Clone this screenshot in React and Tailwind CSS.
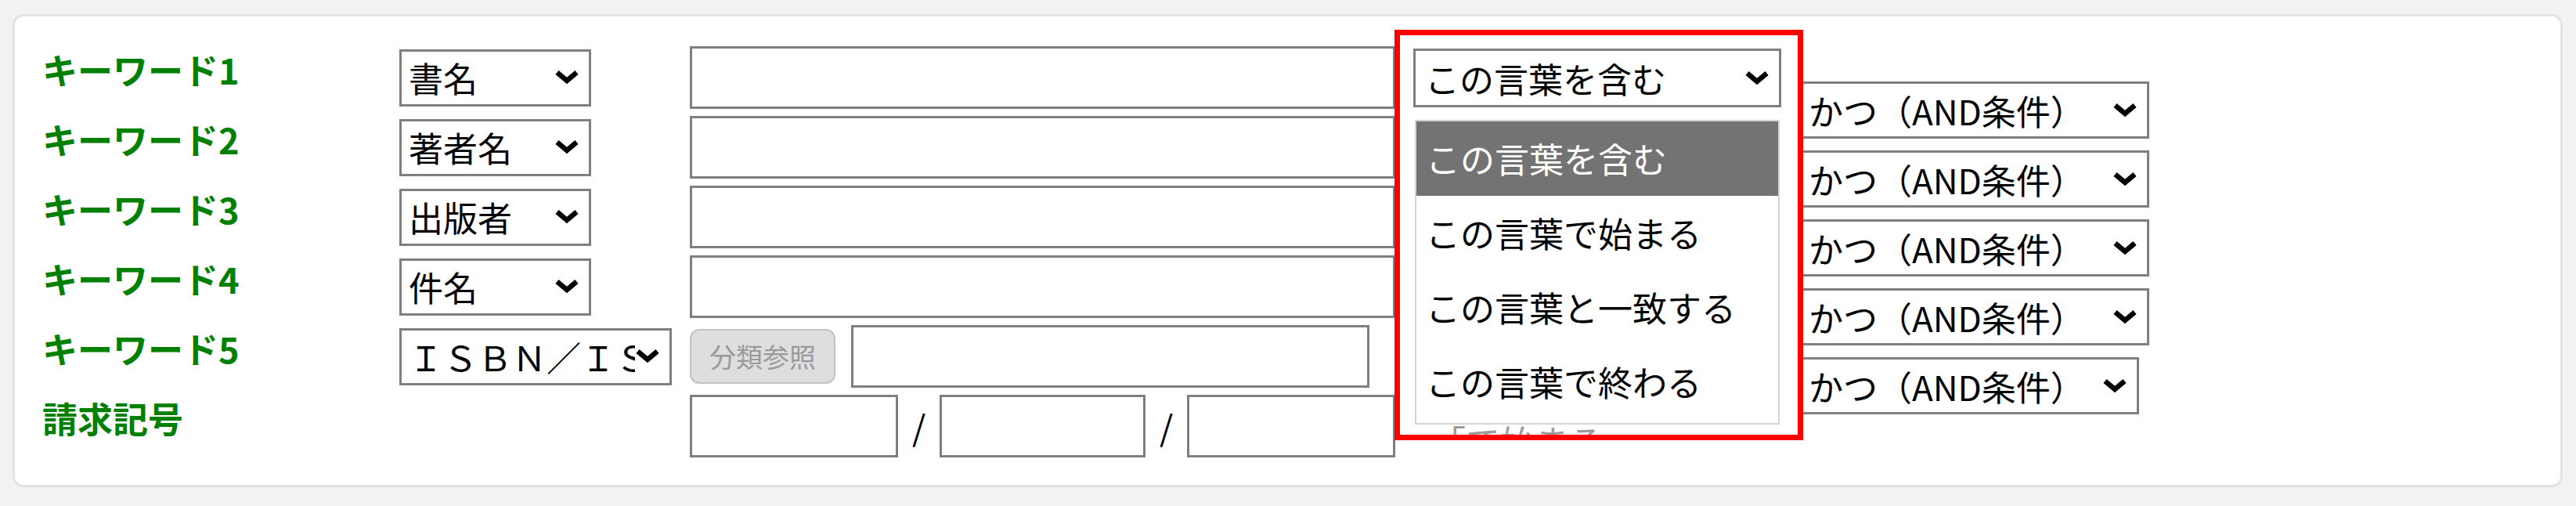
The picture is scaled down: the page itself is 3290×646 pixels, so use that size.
const font = "font-['Noto_Sans_CJK_JP','Noto_Sans_CJK_SC',sans-serif]";

function Chevron() {
  return (
    <svg width="32" height="20" viewBox="0 0 32 20" className="shrink-0">
      <polyline points="3.5,3.5 16,14 28.5,3.5" fill="none" stroke="#000" strokeWidth="6.5" strokeLinejoin="miter" />
    </svg>
  );
}

function Select({ className, text, padClass = "pl-[9px]" }) {
  return (
    <div className={`flex items-center border-[3px] border-[#7f7f7f] bg-white ${className}`}>
      <span className={`flex-1 overflow-hidden whitespace-nowrap text-[44px] leading-[1.5] text-black ${padClass}`}>{text}</span>
      <span className="mr-[12px] flex items-center">
        <Chevron />
      </span>
    </div>
  );
}

function Input({ className }) {
  return <div className={`h-[80px] border-[3px] border-[#7f7f7f] bg-white ${className}`} />;
}

function Label({ children }) {
  return (
    <div className="pt-[3px] text-[45px] font-bold leading-[1.2] text-[#008000] whitespace-nowrap">{children}</div>
  );
}

export default function App() {
  const rows = [
    { label: "キーワード1", sel: "書名" },
    { label: "キーワード2", sel: "著者名" },
    { label: "キーワード3", sel: "出版者" },
    { label: "キーワード4", sel: "件名" },
  ];
  const options = ["この言葉を含む", "この言葉で始まる", "この言葉と一致する", "この言葉で終わる"];
  return (
    <div className={`w-[3290px] h-[646px] bg-[#f2f2f2] pt-[18px] pl-[16px] ${font}`}>
      <div className="relative flex w-[3257px] h-[604px] rounded-[14px] border-[3px] border-[#e3e3e3] bg-white">
        <div className="ml-[35px] mt-[38px] grid h-fit grid-cols-[456px_371px_901px] grid-rows-[repeat(6,80px)] gap-y-[9px]">
          {rows.map((r) => (
            <div key={r.label} className="contents">
              <Label>{r.label}</Label>
              <div className="flex items-center">
                <Select className="h-[73px] w-[245px]" text={r.sel} />
              </div>
              <Input className="w-full" />
            </div>
          ))}
          <Label>キーワード5</Label>
          <div className="flex items-center">
            <Select className="h-[73px] w-[348px]" text="ＩＳＢＮ／ＩＳＳＮ" />
          </div>
          <div className="flex items-center">
            <div className="flex h-[70px] w-[186px] items-center justify-center rounded-[12px] border-[2px] border-[#c2c2c2] bg-[#dedede] text-[34px] leading-[1.2] text-[#9a9a9a]">
              分類参照
            </div>
            <Input className="ml-[20px] w-[662px]" />
          </div>
          <Label>請求記号</Label>
          <div />
          <div className="flex items-center">
            <Input className="w-[266px]" />
            <span className="w-[53px] text-center text-[44px] leading-[1.2] text-black">/</span>
            <Input className="w-[263px]" />
            <span className="w-[53px] text-center text-[44px] leading-[1.2] text-black">/</span>
            <Input className="w-[266px]" />
          </div>
        </div>

        <div className="ml-[23px] mt-[41px] h-fit w-[470px]">
          <Select className="h-[75px] w-[470px]" text="この言葉を含む" padClass="pl-[12px]" />
        </div>

        <div className="ml-[24px] mt-[83px] flex h-fit w-[446px] flex-col gap-[15px]">
          <Select className="h-[73px] w-[446px]" text="かつ（AND条件）" padClass="pl-[8px]" />
          <Select className="h-[73px] w-[446px]" text="かつ（AND条件）" padClass="pl-[8px]" />
          <Select className="h-[73px] w-[446px]" text="かつ（AND条件）" padClass="pl-[8px]" />
          <Select className="h-[73px] w-[446px]" text="かつ（AND条件）" padClass="pl-[8px]" />
          <Select className="h-[73px] w-[433px]" text="かつ（AND条件）" padClass="pl-[8px]" />
        </div>

        <div className="absolute left-[1809px] top-[521px] h-[14px] w-[260px] overflow-hidden">
          <span className="-mt-[1px] block whitespace-nowrap text-[44px] leading-none text-[#9b9b9b]">「で始まる</span>
        </div>

        <div className="absolute left-[1788px] top-[132px] h-[389px] w-[466px] border-[2px] border-[#d4d4d4] bg-white">
          {options.map((o, i) => (
            <div
              key={o}
              className={
                i === 0
                  ? "flex h-[95px] items-center bg-[#737373] pl-[12px] text-[44px] leading-[1.2] text-white"
                  : "flex h-[95px] items-center pl-[12px] text-[44px] leading-[1.2] text-black"
              }
            >
              {o}
            </div>
          ))}
        </div>

        <div className="absolute left-[1762px] top-[17px] h-[524px] w-[522px] border-[7px] border-[#ff0000]" />
      </div>
    </div>
  );
}
